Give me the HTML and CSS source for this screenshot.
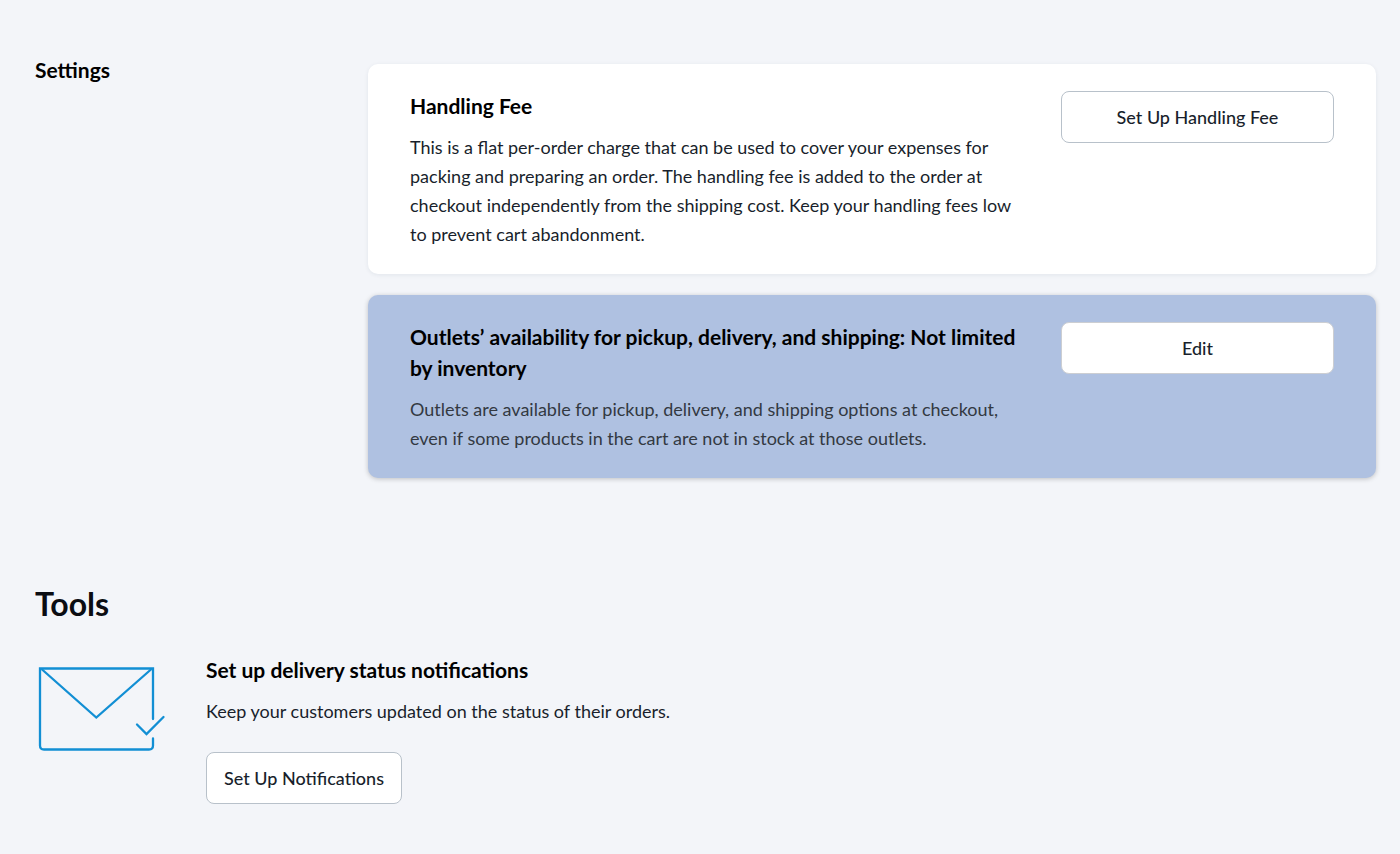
FILE: index.html
```html
<!DOCTYPE html>
<html lang="en">
<head>
<meta charset="utf-8">
<meta name="viewport" content="width=device-width, initial-scale=1">
<title>Shipping settings</title>
<link rel="stylesheet" href="styles.css">
</head>
<body>
<main class="page">
  <section class="settings">
    <h2 class="title">Settings</h2>
    <div class="cards">
      <article class="card">
        <div class="card-body">
          <h3 class="title">Handling Fee</h3>
          <p class="text">This is a flat per-order charge that can be used to cover your expenses for packing and preparing an order. The handling fee is added to the order at checkout independently from the shipping cost. Keep your handling fees low to prevent cart abandonment.</p>
        </div>
        <button type="button" class="btn btn-wide">Set Up Handling Fee</button>
      </article>
      <article class="card card-selected">
        <div class="card-body">
          <h3 class="title">Outlets’ availability for pickup, delivery, and shipping: Not limited by inventory</h3>
          <p class="text">Outlets are available for pickup, delivery, and shipping options at checkout, even if some products in the cart are not in stock at those outlets.</p>
        </div>
        <button type="button" class="btn btn-wide">Edit</button>
      </article>
    </div>
  </section>
  <section class="tools">
    <h1 class="heading">Tools</h1>
    <div class="tool">
      <svg class="tool-icon" viewBox="0 0 131 88" fill="none" stroke="#128fd4" stroke-width="2.3" stroke-linecap="round" aria-hidden="true">
        <path d="M118 54V3.5H5V80.500Q5 84.500 9 84.500H114Q118 84.500 118 80.500V73.500"/>
        <path d="M6.500 4L61.300 52.500L116.500 4" stroke-linecap="butt"/>
        <path d="M102 59.500L111.500 69L128.500 52"/>
      </svg>
      <div class="tool-body">
        <h3 class="title">Set up delivery status notifications</h3>
        <p class="text">Keep your customers updated on the status of their orders.</p>
        <button type="button" class="btn">Set Up Notifications</button>
      </div>
    </div>
  </section>
</main>
</body>
</html>
```
FILE: styles.css
```css
* { box-sizing: border-box; }
body {
  margin: 0;
  background: #f3f5f9;
  color: #000;
  font-family: Lato, sans-serif;
}
h1, h2, h3, p { margin: 0; }
.page { padding: 64px 24px 50px 35px; }
.settings {
  display: grid;
  grid-template-columns: 309px 1fr;
  column-gap: 24px;
}
.title { font-size: 21px; line-height: 31px; font-weight: 700; }
.settings > .title { line-height: 12px; }
.cards { display: grid; row-gap: 21px; }
.card {
  display: flex;
  align-items: flex-start;
  gap: 36px;
  padding: 26px 42px 25px;
  border-radius: 10px;
  background: #fff;
  box-shadow: 0 1px 4px rgba(30, 50, 80, 0.08);
}
.card-selected {
  background: #afc1e1;
  box-shadow: 0 1px 5px rgba(0, 0, 0, 0.22);
}
.card-body { flex: 1; }
.text { margin-top: 12px; font-size: 18px; line-height: 29px; color: #191f2c; }
.card-selected .text { color: #333942; }
.btn {
  height: 52px;
  padding: 0 17px;
  border: 1px solid #b8c1ca;
  border-radius: 8px;
  background: #fff;
  color: #191f2c;
  font: 500 18px/24px Lato, sans-serif;
}
.btn-wide { flex: 0 0 273px; margin-top: 1px; }
.card-selected .btn { border-color: #ccced2; }
.tools { margin-top: 105px; }
.heading { font-size: 32px; line-height: 42px; color: #0b0d12; }
.tool { display: flex; gap: 40px; margin-top: 29px; }
.tool-icon { flex: none; width: 131px; height: 88px; margin-top: 11px; }
.tool .btn { margin-top: 26px; }
```
